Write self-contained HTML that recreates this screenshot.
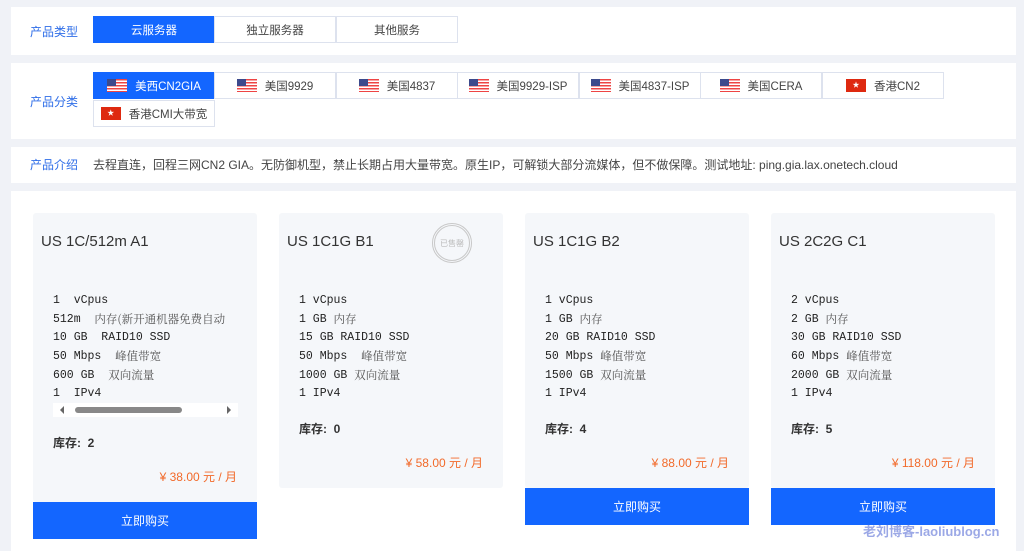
<!DOCTYPE html>
<html><head><meta charset="utf-8"><style>
*{margin:0;padding:0;box-sizing:border-box}
body{width:1024px;height:551px;background:#f0f2f7;font-family:"Liberation Sans","Noto Sans CJK SC",sans-serif;position:relative;overflow:hidden;color:#333}
.p{position:absolute;left:11px;width:1005px;background:#fff}
.lab{position:absolute;left:30px;font-size:12px;color:#2f6ee8}
.b{position:absolute;height:27px;width:122px;border:1px solid #dde2ee;background:#fff;font-size:11.5px;color:#444;display:flex;align-items:center;justify-content:center;gap:8px}
.b.on{background:#1366ff;color:#fff;border-color:#1366ff}
.us{width:20px;height:13px;background:repeating-linear-gradient(#e44 0 1.5px,#fff 1.5px 3px);position:relative}
.us:before{content:"";position:absolute;left:0;top:0;width:9px;height:7px;background:#3c4a8c}
.hk{width:20px;height:13px;background:#de2910;color:#fff;font-size:7px;line-height:13px;text-align:center}
.c{position:absolute;top:213px;width:224px;background:#f5f7fa;border-radius:3px}
.t{position:absolute;left:8px;top:20px;font-size:15px;color:#333}
.s{position:absolute;left:20px;top:78px;font-family:"Liberation Mono","Noto Sans CJK SC",monospace;font-size:11.5px;color:#222;white-space:pre}
.s div{height:18.7px;display:flex;align-items:center;overflow:hidden}
.s i{font-style:normal;font-family:"Noto Serif CJK SC",serif;color:#555;line-height:14px}
.k{position:absolute;left:20px;font-size:12px;font-weight:bold;color:#333}
.pr{position:absolute;right:20px;font-size:12px;color:#f26a2a}
.bt{position:absolute;height:37px;width:224px;background:#1366ff;color:#fff;font-size:12px;display:flex;align-items:center;justify-content:center}
</style></head><body>
<div class="p" style="top:7px;height:48px"></div>
<div class="lab" style="top:23px">产品类型</div>
<div class="b on" style="left:93px;top:16px">云服务器</div>
<div class="b" style="left:214px;top:16px">独立服务器</div>
<div class="b" style="left:336px;top:16px">其他服务</div>

<div class="p" style="top:63px;height:76px"></div>
<div class="lab" style="top:93px">产品分类</div>
<div class="b on" style="left:93px;top:72px"><span class="us"></span>美西CN2GIA</div>
<div class="b" style="left:214px;top:72px"><span class="us"></span>美国9929</div>
<div class="b" style="left:336px;top:72px"><span class="us"></span>美国4837</div>
<div class="b" style="left:457px;top:72px"><span class="us"></span>美国9929-ISP</div>
<div class="b" style="left:579px;top:72px"><span class="us"></span>美国4837-ISP</div>
<div class="b" style="left:700px;top:72px"><span class="us"></span>美国CERA</div>
<div class="b" style="left:822px;top:72px"><span class="hk">★</span>香港CN2</div>
<div class="b" style="left:93px;top:100px"><span class="hk">★</span>香港CMI大带宽</div>

<div class="p" style="top:147px;height:36px"></div>
<div class="lab" style="top:156px">产品介绍</div>
<div style="position:absolute;left:93px;top:156px;font-size:12px;color:#444">去程直连，回程三网CN2 GIA。无防御机型，禁止长期占用大量带宽。原生IP，可解锁大部分流媒体，但不做保障。测试地址: ping.gia.lax.onetech.cloud</div>

<div class="p" style="top:191px;height:360px"></div>

<div class="c" style="left:33px;height:289px">
<div class="t">US 1C/512m A1</div>
<div class="s"><div>1  vCpus</div><div>512m  <i>内存(新开通机器免费自动</i></div><div>10 GB  RAID10 SSD</div><div>50 Mbps  <i>峰值带宽</i></div><div>600 GB  <i>双向流量</i></div><div>1  IPv4</div></div>
<div style="position:absolute;left:20px;top:190px;width:185px;height:14px;background:#fff"><div style="position:absolute;left:22px;top:4px;width:107px;height:6px;border-radius:3px;background:#888"></div><div style="position:absolute;left:7px;top:3px;border:4px solid transparent;border-right-color:#666;border-left:0"></div><div style="position:absolute;right:7px;top:3px;border:4px solid transparent;border-left-color:#666;border-right:0"></div></div>
<div class="k" style="top:221px">库存:&nbsp; 2</div>
<div class="pr" style="top:255px">¥ 38.00 元 / 月</div>
</div>
<div class="bt" style="left:33px;top:502px">立即购买</div>

<div class="c" style="left:279px;height:275px">
<div class="t">US 1C1G B1</div>
<div style="position:absolute;left:153px;top:10px;width:40px;height:40px;border-radius:50%;border:3px double #c8c8c8;color:#bbb;font-size:8px;display:flex;align-items:center;justify-content:center">已售罄</div>
<div class="s"><div>1 vCpus</div><div>1 GB <i>内存</i></div><div>15 GB RAID10 SSD</div><div>50 Mbps  <i>峰值带宽</i></div><div>1000 GB <i>双向流量</i></div><div>1 IPv4</div></div>
<div class="k" style="top:207px">库存:&nbsp; 0</div>
<div class="pr" style="top:241px">¥ 58.00 元 / 月</div>
</div>

<div class="c" style="left:525px;height:275px">
<div class="t">US 1C1G B2</div>
<div class="s"><div>1 vCpus</div><div>1 GB <i>内存</i></div><div>20 GB RAID10 SSD</div><div>50 Mbps <i>峰值带宽</i></div><div>1500 GB <i>双向流量</i></div><div>1 IPv4</div></div>
<div class="k" style="top:207px">库存:&nbsp; 4</div>
<div class="pr" style="top:241px">¥ 88.00 元 / 月</div>
</div>
<div class="bt" style="left:525px;top:488px">立即购买</div>

<div class="c" style="left:771px;height:275px">
<div class="t">US 2C2G C1</div>
<div class="s"><div>2 vCpus</div><div>2 GB <i>内存</i></div><div>30 GB RAID10 SSD</div><div>60 Mbps <i>峰值带宽</i></div><div>2000 GB <i>双向流量</i></div><div>1 IPv4</div></div>
<div class="k" style="top:207px">库存:&nbsp; 5</div>
<div class="pr" style="top:241px">¥ 118.00 元 / 月</div>
</div>
<div class="bt" style="left:771px;top:488px">立即购买</div>

<div style="position:absolute;left:863px;top:521px;font-size:13px;font-weight:bold;color:#5a6fd6;opacity:.6">老刘博客-laoliublog.cn</div>
</body></html>
